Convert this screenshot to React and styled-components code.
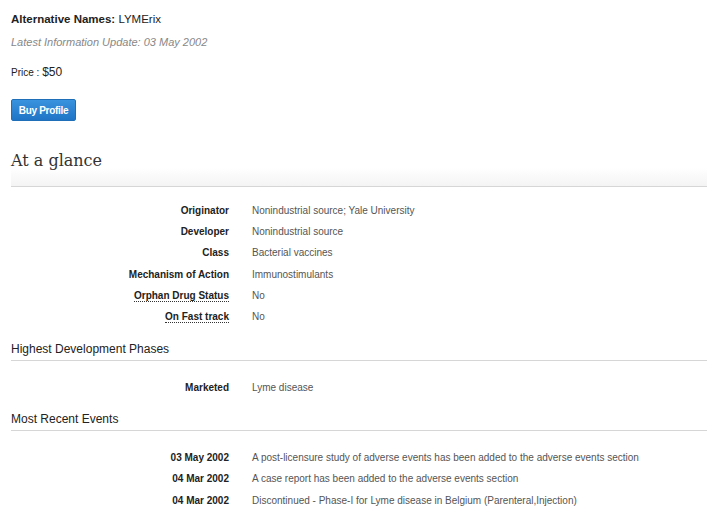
import React from "react";
import styled, { createGlobalStyle } from "styled-components";

const Global = createGlobalStyle`
  html, body { margin: 0; padding: 0; background: #fff; }
  body { font-family: "Liberation Sans", Arial, sans-serif; color: #333; }
`;

const Page = styled.div`
  position: relative;
  width: 707px;
  height: 509px;
  overflow: hidden;
  padding: 10px 0 0 11px;
  box-sizing: border-box;
  &::after {
    content: "";
    position: absolute;
    left: 0;
    right: 0;
    bottom: -40px;
    height: 75px;
    background: radial-gradient(ellipse 55% 50% at 50% 100%, rgba(0,0,0,0.08), rgba(0,0,0,0));
    pointer-events: none;
  }
`;

const AltNames = styled.div`
  font-size: 11.5px;
  line-height: 18px;
  color: #222;
  b { font-weight: bold; }
`;

const Updated = styled.div`
  margin-top: 6px;
  font-size: 11px;
  line-height: 16px;
  font-style: italic;
  color: #888;
`;

const Price = styled.div`
  margin-top: 13px;
  font-size: 10px;
  line-height: 18px;
  color: #222;
  span { font-size: 12px; }
`;

const BuyButton = styled.button`
  margin-top: 17px;
  display: block;
  height: 22px;
  width: 65px;
  padding: 0;
  border: 1px solid #1f6fb8;
  border-radius: 2px;
  background: linear-gradient(#3a93de, #1f74c6);
  color: #fff;
  font-family: "Liberation Sans", Arial, sans-serif;
  font-size: 10px;
  font-weight: bold;
  letter-spacing: -0.3px;
  cursor: pointer;
`;

const GlanceTitle = styled.h2`
  margin: 28px 0 0 0;
  padding: 0 0 13px 0;
  font-family: "DejaVu Serif", Georgia, serif;
  font-weight: normal;
  font-size: 16px;
  line-height: 24px;
  color: #333;
  border-bottom: 1px solid #d6d6d6;
  background: linear-gradient(rgba(245,245,245,0) 50%, #f4f4f4);
`;

const Section = styled.h3`
  margin: 0;
  padding: 0 0 ${(p) => p.$pb}px 0;
  font-size: 12px;
  line-height: 18px;
  font-weight: normal;
  color: #222;
  border-bottom: 1px solid #d6d6d6;
`;

const DefList = styled.div`
  display: grid;
  grid-template-columns: 218px 1fr;
  column-gap: 23px;
  row-gap: ${(p) => p.$gap || 5.2}px;
  padding: ${(p) => p.$pad};
  font-size: 10px;
  line-height: 16px;
`;

const Term = styled.div`
  text-align: right;
  font-weight: bold;
  color: #222;
  span {
    border-bottom: ${(p) => (p.$dotted ? "1px dotted #333" : "none")};
  }
`;

const Desc = styled.div`
  color: #555;
  white-space: nowrap;
`;

const glance = [
  ["Originator", "Nonindustrial source; Yale University"],
  ["Developer", "Nonindustrial source"],
  ["Class", "Bacterial vaccines"],
  ["Mechanism of Action", "Immunostimulants"],
  ["Orphan Drug Status", "No", true],
  ["On Fast track", "No", true],
];

const events = [
  ["03 May 2002", "A post-licensure study of adverse events has been added to the adverse events section"],
  ["04 Mar 2002", "A case report has been added to the adverse events section"],
  ["04 Mar 2002", "Discontinued - Phase-I for Lyme disease in Belgium (Parenteral,Injection)"],
];

export default function App() {
  return (
    <>
      <Global />
      <Page>
        <AltNames><b>Alternative Names:</b> LYMErix</AltNames>
        <Updated>Latest Information Update: 03 May 2002</Updated>
        <Price>Price : <span>$50</span></Price>
        <BuyButton>Buy Profile</BuyButton>
        <GlanceTitle>At a glance</GlanceTitle>
        <DefList $pad="16px 0 15px 0">
          {glance.map(([t, d, dotted]) => (
            <React.Fragment key={t}>
              <Term $dotted={dotted}><span>{t}</span></Term>
              <Desc>{d}</Desc>
            </React.Fragment>
          ))}
        </DefList>
        <Section $pb={2}>Highest Development Phases</Section>
        <DefList $pad="19px 0 14px 0">
          <Term><span>Marketed</span></Term>
          <Desc>Lyme disease</Desc>
        </DefList>
        <Section $pb={2}>Most Recent Events</Section>
        <DefList $pad="19px 0 0 0" $gap={5.5}>
          {events.map(([t, d], i) => (
            <React.Fragment key={i}>
              <Term><span>{t}</span></Term>
              <Desc>{d}</Desc>
            </React.Fragment>
          ))}
        </DefList>
      </Page>
    </>
  );
}
